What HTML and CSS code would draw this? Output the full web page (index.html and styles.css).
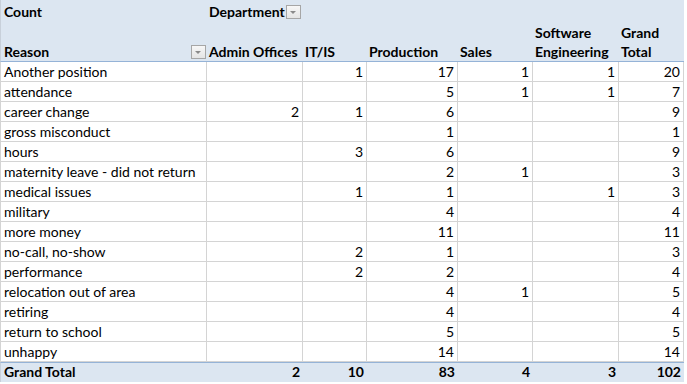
FILE: index.html
```html
<!DOCTYPE html>
<html>
<head>
<meta charset="utf-8">
<link rel="stylesheet" href="styles.css">
</head>
<body>
<div class="pivot">
  <div class="hc h1 first">Count</div>
  <div class="hc h1 dept"><span>Department</span><span class="dd"></span></div>

  <div class="hc h2 first reason"><span>Reason</span><span class="dd"></span></div>
  <div class="hc h2 nw">Admin Offices</div>
  <div class="hc h2 nw">IT/IS</div>
  <div class="hc h2 nw">Production</div>
  <div class="hc h2 nw">Sales</div>
  <div class="hc h2">Software Engineering</div>
  <div class="hc h2">Grand Total</div>

  <div class="c first">Another position</div><div class="c n"></div><div class="c n">1</div><div class="c n">17</div><div class="c n">1</div><div class="c n">1</div><div class="c n">20</div>
  <div class="c first">attendance</div><div class="c n"></div><div class="c n"></div><div class="c n">5</div><div class="c n">1</div><div class="c n">1</div><div class="c n">7</div>
  <div class="c first">career change</div><div class="c n">2</div><div class="c n">1</div><div class="c n">6</div><div class="c n"></div><div class="c n"></div><div class="c n">9</div>
  <div class="c first">gross misconduct</div><div class="c n"></div><div class="c n"></div><div class="c n">1</div><div class="c n"></div><div class="c n"></div><div class="c n">1</div>
  <div class="c first">hours</div><div class="c n"></div><div class="c n">3</div><div class="c n">6</div><div class="c n"></div><div class="c n"></div><div class="c n">9</div>
  <div class="c first">maternity leave - did not return</div><div class="c n"></div><div class="c n"></div><div class="c n">2</div><div class="c n">1</div><div class="c n"></div><div class="c n">3</div>
  <div class="c first">medical issues</div><div class="c n"></div><div class="c n">1</div><div class="c n">1</div><div class="c n"></div><div class="c n">1</div><div class="c n">3</div>
  <div class="c first">military</div><div class="c n"></div><div class="c n"></div><div class="c n">4</div><div class="c n"></div><div class="c n"></div><div class="c n">4</div>
  <div class="c first">more money</div><div class="c n"></div><div class="c n"></div><div class="c n">11</div><div class="c n"></div><div class="c n"></div><div class="c n">11</div>
  <div class="c first">no-call, no-show</div><div class="c n"></div><div class="c n">2</div><div class="c n">1</div><div class="c n"></div><div class="c n"></div><div class="c n">3</div>
  <div class="c first">performance</div><div class="c n"></div><div class="c n">2</div><div class="c n">2</div><div class="c n"></div><div class="c n"></div><div class="c n">4</div>
  <div class="c first">relocation out of area</div><div class="c n"></div><div class="c n"></div><div class="c n">4</div><div class="c n">1</div><div class="c n"></div><div class="c n">5</div>
  <div class="c first">retiring</div><div class="c n"></div><div class="c n"></div><div class="c n">4</div><div class="c n"></div><div class="c n"></div><div class="c n">4</div>
  <div class="c first">return to school</div><div class="c n"></div><div class="c n"></div><div class="c n">5</div><div class="c n"></div><div class="c n"></div><div class="c n">5</div>
  <div class="c first">unhappy</div><div class="c n"></div><div class="c n"></div><div class="c n">14</div><div class="c n"></div><div class="c n"></div><div class="c n">14</div>

  <div class="t first">Grand Total</div><div class="t n">2</div><div class="t n">10</div><div class="t n">83</div><div class="t n">4</div><div class="t n">3</div><div class="t n">102</div>
</div>
</body>
</html>
```
FILE: styles.css
```css
html, body {
  margin: 0;
  padding: 0;
  background: #ffffff;
}
body {
  font-family: "Lato", "Liberation Sans", sans-serif;
  font-size: 14px;
  color: #000;
}
.pivot {
  display: grid;
  grid-template-columns: 207px 96px 64px 91px 75px 86px 65px;
  grid-template-rows: 22px 40px repeat(15, 20px) 20px;
  width: 688px;
  background: #fff;
}
.hc {
  background: #dce6f1;
  font-weight: bold;
  display: flex;
  align-items: flex-end;
  padding: 0 3px 1px 3px;
  line-height: 18px;
  box-sizing: border-box;
}
.h1.first, .h2.first {
  border-left: 1px solid #c8d0da;
}
.h1.dept {
  grid-column: 2 / 8;
  padding-left: 2px;
  padding-bottom: 1px;
}
.h2 {
  border-bottom: 1px solid #95b3d7;
  padding-left: 2px;
  padding-bottom: 0;
  line-height: 19px;
}
.nw {
  white-space: nowrap;
}
.h2.first, .h1.first, .c.first, .t.first {
  padding-left: 3px;
}
.reason {
  justify-content: space-between;
  padding-right: 1px;
}
.dd {
  display: inline-block;
  width: 15px;
  height: 14px;
  box-sizing: border-box;
  border: 1px solid #a6a6a6;
  background: linear-gradient(#f7f7f7, #e4e4e4);
  position: relative;
  margin-left: 1px;
  margin-bottom: 2px;
}
.dd::after {
  content: "";
  position: absolute;
  left: 3px;
  top: 5px;
  border-left: 3px solid transparent;
  border-right: 3px solid transparent;
  border-top: 3px solid #8a8a8a;
}
.c {
  border-right: 1px solid #d4d4d4;
  border-bottom: 1px solid #d4d4d4;
  box-sizing: border-box;
  padding: 0 3px;
  line-height: 19px;
  white-space: nowrap;
  overflow: hidden;
}
.c.first {
  border-left: 1px solid #d4d4d4;
}
.n {
  text-align: right;
}
.t {
  background: #dce6f1;
  font-weight: bold;
  border-top: 1px solid #95b3d7;
  box-sizing: border-box;
  padding: 0 3px;
  line-height: 18px;
  white-space: nowrap;
}
.t.first {
  border-left: 1px solid #c8d0da;
}
```
